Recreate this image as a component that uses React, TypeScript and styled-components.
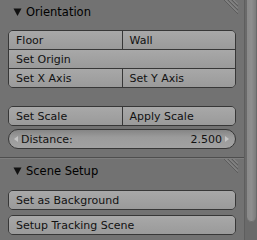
import React from "react";
import styled, { createGlobalStyle } from "styled-components";

const Global = createGlobalStyle`
  html, body { margin: 0; padding: 0; background: #727272; }
  body { font-family: "DejaVu Sans", sans-serif; font-size: 11px; }
`;

const Frame = styled.div`
  display: flex;
  width: 257px;
  height: 240px;
  overflow: hidden;
`;

const Main = styled.div`
  width: 244px;
  display: flex;
  flex-direction: column;
`;

const ScrollTrack = styled.div`
  width: 13px;
  border-left: 1px solid #5e5e5e;
  background: #6a6a6a;
  display: flex;
  flex-direction: column;
  padding: 0 1px 0 2px;
  box-sizing: border-box;
`;

const ScrollThumb = styled.div`
  height: 222px;
  background: linear-gradient(to right, #8a8a8a, #8e8e8e 50%, #7c7c7c);
  border-radius: 0 0 5px 5px;
  box-shadow: inset 0 -1px 0 #6e6e6e;
`;

const Panel = styled.section`
  display: flex;
  flex-direction: column;
  padding: 0 8px 0 8px;
`;

const Header = styled.div<{ $h: number }>`
  height: ${(p) => p.$h}px;
  display: flex;
  align-items: center;
  justify-content: space-between;
  color: #000;
  font-size: 11.5px;
`;

const HeaderLabel = styled.div`
  display: flex;
  align-items: center;
  gap: 4px;
  padding-left: 5px;
  padding-top: 2px;
`;

const Grip = styled.svg`
  align-self: flex-start;
  margin-right: -2px;
`;

const Group = styled.div<{ $mt: number }>`
  display: flex;
  flex-direction: column;
  margin-top: ${(p) => p.$mt}px;
  border: 1px solid #373737;
  border-radius: 5px;
  overflow: hidden;
`;

const Row = styled.div`
  display: flex;
  & + & { border-top: 1px solid #373737; }
`;

const Btn = styled.div<{ $h?: number }>`
  flex: 1;
  height: ${(p) => p.$h ?? 18}px;
  display: flex;
  align-items: center;
  padding-left: 7px;
  background: linear-gradient(to bottom, #a8a8a8, #9a9a9a);
  color: #111;
  & + & { border-left: 1px solid #373737; }
`;

const Slider = styled.div`
  margin-top: 3px;
  height: 18px;
  border: 1px solid #373737;
  border-radius: 10px;
  background: linear-gradient(to bottom, #858585, #9b9b9b 40%, #a2a2a2);
  display: flex;
  align-items: center;
  justify-content: space-between;
  padding: 0 6px 0 5px;
  color: #111;
`;

const SliderSide = styled.div`
  display: flex;
  align-items: center;
  gap: 3px;
`;

const Arrow = styled.span<{ $dir: "l" | "r" }>`
  width: 0;
  height: 0;
  border-top: 3px solid transparent;
  border-bottom: 3px solid transparent;
  ${(p) => (p.$dir === "l" ? "border-right: 4px solid #c4c4c4;" : "border-left: 4px solid #c4c4c4;")}
`;

const Separator = styled.div`
  margin-top: 8px;
  height: 1px;
  background: #4e4e4e;
  border-bottom: 1px solid #7e7e7e;
`;

const Tri = () => (
  <svg width="9" height="8" viewBox="0 0 9 8">
    <path d="M0.5 0.5 L8.5 0.5 L4.5 8 Z" fill="#111" />
  </svg>
);

const GripIcon = () => (
  <Grip width="14" height="16" viewBox="0 0 14 16">
    {[0, 4, 8].map((o) => (
      <g key={o}>
        <line x1={o} y1={0} x2={14} y2={14 - o} stroke="#5c5c5c" strokeWidth="1" />
        <line x1={o + 1.5} y1={0} x2={14} y2={12.5 - o} stroke="#8e8e8e" strokeWidth="1" />
      </g>
    ))}
  </Grip>
);

export default function App() {
  return (
    <Frame>
      <Global />
      <Main>
        <Panel>
          <Header $h={22}>
            <HeaderLabel>
              <Tri />
              <span>Orientation</span>
            </HeaderLabel>
            <GripIcon />
          </Header>
          <Group $mt={8}>
            <Row>
              <Btn>Floor</Btn>
              <Btn>Wall</Btn>
            </Row>
            <Row>
              <Btn>Set Origin</Btn>
            </Row>
            <Row>
              <Btn>Set X Axis</Btn>
              <Btn>Set Y Axis</Btn>
            </Row>
          </Group>
          <Group $mt={18}>
            <Row>
              <Btn>Set Scale</Btn>
              <Btn>Apply Scale</Btn>
            </Row>
          </Group>
          <Slider>
            <SliderSide>
              <Arrow $dir="l" />
              <span>Distance:</span>
            </SliderSide>
            <SliderSide>
              <span>2.500</span>
              <Arrow $dir="r" />
            </SliderSide>
          </Slider>
        </Panel>
        <Separator />
        <Panel>
          <Header $h={22}>
            <HeaderLabel>
              <Tri />
              <span>Scene Setup</span>
            </HeaderLabel>
            <GripIcon />
          </Header>
          <Group $mt={9}>
            <Row>
              <Btn>Set as Background</Btn>
            </Row>
          </Group>
          <Group $mt={5}>
            <Row>
              <Btn>Setup Tracking Scene</Btn>
            </Row>
          </Group>
        </Panel>
      </Main>
      <ScrollTrack>
        <ScrollThumb />
      </ScrollTrack>
    </Frame>
  );
}
